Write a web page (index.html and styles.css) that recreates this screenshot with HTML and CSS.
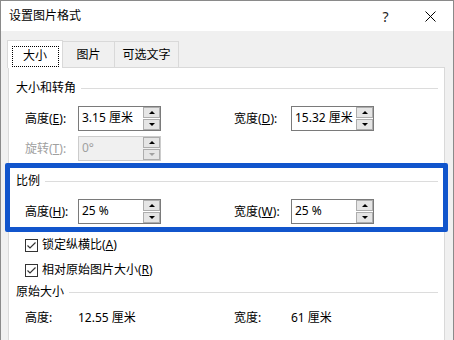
FILE: index.html
```html
<!DOCTYPE html>
<html lang="zh-CN">
<head>
    <meta charset="UTF-8">
    <title>设置图片格式</title>
    <link rel="stylesheet" href="styles.css">
</head>
<body>
    <div class="window">
        <div class="titlebar">
            <span class="title">设置图片格式</span>
            <span class="caption-btn help">?</span>
            <span class="caption-btn close">
                <svg width="11" height="11" viewBox="0 0 11 11"><path d="M0.5 0.5 L10.5 10.5 M10.5 0.5 L0.5 10.5" stroke="#000" stroke-width="1" fill="none"/></svg>
            </span>
        </div>

        <div class="client">
            <div class="tabs">
                <div class="tab active"><span class="focus">大小</span></div>
                <div class="tab">图片</div>
                <div class="tab">可选文字</div>
            </div>

            <div class="panel">
                <div class="group-title first"><span>大小和转角</span></div>

                <div class="field-row">
                    <span class="label">高度(<u>E</u>):</span>
                    <div class="spin">
                        <span class="value">3.15 厘米</span>
                        <div class="spin-btns">
                            <span class="spin-btn"><i class="arrow up"></i></span>
                            <span class="spin-btn"><i class="arrow down"></i></span>
                        </div>
                    </div>
                    <span></span>
                    <span class="label">宽度(<u>D</u>):</span>
                    <div class="spin">
                        <span class="value">15.32 厘米</span>
                        <div class="spin-btns">
                            <span class="spin-btn"><i class="arrow up"></i></span>
                            <span class="spin-btn"><i class="arrow down"></i></span>
                        </div>
                    </div>
                </div>

                <div class="field-row second">
                    <span class="label disabled">旋转(<u>T</u>):</span>
                    <div class="spin disabled">
                        <span class="value">0°</span>
                        <div class="spin-btns">
                            <span class="spin-btn"><i class="arrow up"></i></span>
                            <span class="spin-btn"><i class="arrow down dim"></i></span>
                        </div>
                    </div>
                </div>

                <!-- highlighted section -->
                <div class="highlight">
                    <div class="group-title"><span>比例</span></div>
                    <div class="field-row">
                        <span class="label">高度(<u>H</u>):</span>
                        <div class="spin">
                            <span class="value">25 %</span>
                            <div class="spin-btns">
                                <span class="spin-btn"><i class="arrow up"></i></span>
                                <span class="spin-btn"><i class="arrow down"></i></span>
                            </div>
                        </div>
                        <span></span>
                        <span class="label">宽度(<u>W</u>):</span>
                        <div class="spin">
                            <span class="value">25 %</span>
                            <div class="spin-btns">
                                <span class="spin-btn"><i class="arrow up"></i></span>
                                <span class="spin-btn"><i class="arrow down"></i></span>
                            </div>
                        </div>
                    </div>
                </div>

                <div class="check first">
                    <span class="box"><svg width="11" height="11" viewBox="0 0 11 11"><path d="M1.5 5.5 L4 8 L9.5 2.5" stroke="#333" stroke-width="1.2" fill="none"/></svg></span>
                    <span>锁定纵横比(<u>A</u>)</span>
                </div>
                <div class="check">
                    <span class="box"><svg width="11" height="11" viewBox="0 0 11 11"><path d="M1.5 5.5 L4 8 L9.5 2.5" stroke="#333" stroke-width="1.2" fill="none"/></svg></span>
                    <span>相对原始图片大小(<u>R</u>)</span>
                </div>

                <div class="group-title original"><span>原始大小</span></div>
                <div class="info-row">
                    <span>高度:</span>
                    <span>12.55 厘米</span>
                    <span></span>
                    <span>宽度:</span>
                    <span>61 厘米</span>
                </div>
            </div>
        </div>
    </div>
</body>
</html>
```

FILE: styles.css
```css
body {
    margin: 0;
    font-family: "Noto Sans", "Noto Sans CJK SC", sans-serif;
    font-size: 12px;
    color: #000;
}
.window {
    width: 454px;
    height: 340px;
    box-sizing: border-box;
    border: 1px solid #8a8a8a;
    border-bottom: none;
    background: #f0f0f0;
    overflow: hidden;
}
.titlebar {
    height: 30px;
    background: #fff;
    display: flex;
    align-items: center;
    padding-left: 8px;
}
.title {
    flex: 1;
    line-height: 16px;
}
.caption-btn {
    width: 45px;
    height: 30px;
    display: flex;
    align-items: center;
    justify-content: center;
}
.help {
    font-size: 14px;
    color: #222;
}
.close svg {
    display: block;
}
.client {
    padding: 9px 0 0 6px;
}
.tabs {
    display: flex;
    align-items: flex-end;
}
.tab {
    height: 25px;
    border: 1px solid #d9d9d9;
    border-bottom: none;
    margin-left: -1px;
    display: flex;
    align-items: center;
    justify-content: center;
    line-height: 16px;
    background: #f0f0f0;
}
.tab:nth-child(2) {
    width: 51px;
}
.tab:nth-child(3) {
    width: 63px;
}
.tab.active {
    margin-left: 0;
    width: 54px;
    height: 27px;
    margin-bottom: -1px;
    background: #fff;
    position: relative;
    z-index: 1;
}
.focus {
    width: 45px;
    height: 19px;
    border: 1px dotted #000;
    display: flex;
    align-items: center;
    justify-content: center;
    margin-top: 3px;
}
.panel {
    margin-left: 1px;
    width: 435px;
    height: 300px;
    border: 1px solid #d9d9d9;
    background: #fff;
}
.group-title {
    display: flex;
    align-items: center;
    height: 16px;
    line-height: 16px;
    padding: 0 6px 0 7px;
}
.group-title::after {
    content: "";
    flex: 1;
    height: 1px;
    background: #dcdcdc;
    margin-left: 5px;
}
.group-title.first {
    margin-top: 12px;
}
.field-row {
    display: grid;
    grid-template-columns: 53px 83px 73px 57px 83px;
    align-items: center;
    height: 25px;
    margin-top: 10px;
    padding-left: 16px;
}
.field-row.second {
    margin-top: 5px;
}
.label {
    line-height: 16px;
}
.label.disabled {
    color: #a0a0a0;
}
.spin {
    height: 25px;
    box-sizing: border-box;
    border: 1px solid #7a7a7a;
    background: #fff;
    display: flex;
}
.spin .value {
    flex: 1;
    padding-left: 3px;
    line-height: 22px;
    white-space: nowrap;
}
.spin.disabled {
    border-color: #cccccc;
    background: #f0f0f0;
}
.spin.disabled .value {
    color: #a0a0a0;
}
.spin-btns {
    width: 17px;
    display: flex;
    flex-direction: column;
    gap: 1px;
}
.spin-btn {
    flex: 1;
    box-sizing: border-box;
    border: 1px solid #adadad;
    background: #e5e5e5;
    display: flex;
    align-items: center;
    justify-content: center;
}
.arrow {
    width: 0;
    height: 0;
    border-left: 3px solid transparent;
    border-right: 3px solid transparent;
}
.arrow.up {
    border-bottom: 3px solid #000;
}
.arrow.down {
    border-top: 3px solid #000;
}
.arrow.down.dim {
    border-top-color: #a0a0a0;
}
.highlight {
    margin: 2px -4px 0 -4px;
    border: 5px solid #1155cc;
    border-radius: 2px;
    padding: 5px 0 3px 0;
}
.highlight .group-title {
    padding: 0 5px 0 6px;
}
.highlight .field-row {
    padding-left: 15px;
}
.check {
    display: flex;
    align-items: center;
    height: 18px;
    margin-top: 7px;
    padding-left: 16px;
    line-height: 16px;
}
.check.first {
    margin-top: 4px;
}
.check .box {
    width: 13px;
    height: 13px;
    box-sizing: border-box;
    border: 1px solid #333;
    margin-right: 4px;
    display: flex;
    align-items: center;
    justify-content: center;
}
.check svg {
    display: block;
}
.group-title.original {
    margin-top: 5px;
}
.info-row {
    display: grid;
    grid-template-columns: 53px 83px 73px 57px 83px;
    line-height: 16px;
    margin-top: 10px;
    padding-left: 16px;
}
```
